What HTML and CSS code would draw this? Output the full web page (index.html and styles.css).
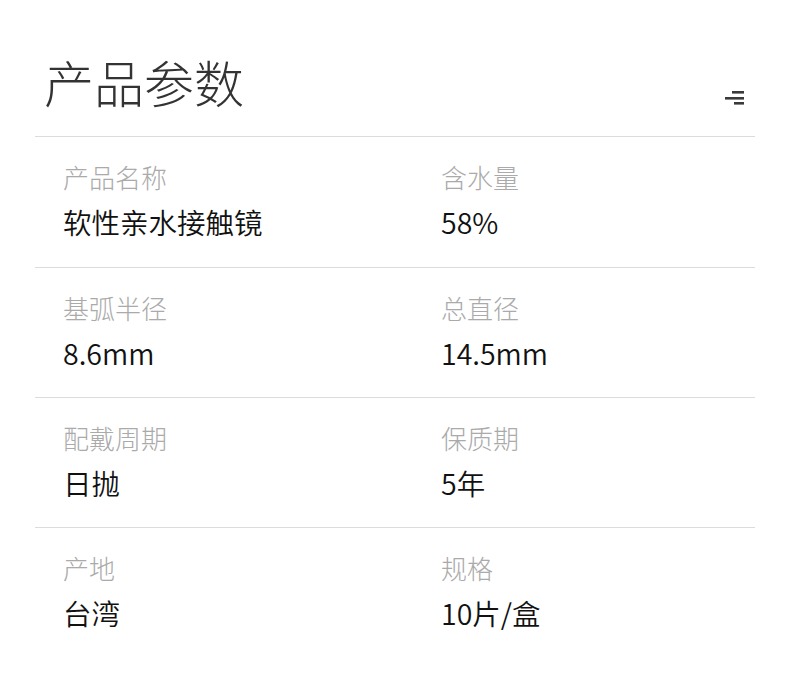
FILE: index.html
```html
<!DOCTYPE html>
<html lang="zh-CN">
<head>
<meta charset="utf-8">
<title>产品参数</title>
<link rel="stylesheet" href="styles.css">
</head>
<body>
<div class="page">
  <header class="head">
    <h1 class="title">产品参数</h1>
    <svg class="menu" width="20" height="14" viewBox="0 0 20 14" aria-hidden="true">
      <rect x="7" y="0" width="12" height="2.6" fill="#3a3a3a"/>
      <rect x="0" y="6" width="19" height="2.6" fill="#3a3a3a"/>
      <rect x="9" y="11" width="10" height="2.6" fill="#3a3a3a"/>
    </svg>
  </header>
  <div class="row first">
    <div class="cell"><div class="label">产品名称</div><div class="value">软性亲水接触镜</div></div>
    <div class="cell"><div class="label">含水量</div><div class="value">58%</div></div>
  </div>
  <div class="row">
    <div class="cell"><div class="label">基弧半径</div><div class="value">8.6mm</div></div>
    <div class="cell"><div class="label">总直径</div><div class="value">14.5mm</div></div>
  </div>
  <div class="row">
    <div class="cell"><div class="label">配戴周期</div><div class="value">日抛</div></div>
    <div class="cell"><div class="label">保质期</div><div class="value">5年</div></div>
  </div>
  <div class="row">
    <div class="cell"><div class="label">产地</div><div class="value">台湾</div></div>
    <div class="cell"><div class="label">规格</div><div class="value">10片/盒</div></div>
  </div>
</div>
</body>
</html>
```
FILE: styles.css
```css
html, body {
  margin: 0;
  padding: 0;
  background: #fff;
}
body {
  font-family: "Noto Sans CJK SC", "Noto Sans", sans-serif;
}
.page {
  width: 720px;
  margin: 0 35px;
}
.head {
  height: 136px;
  display: flex;
  align-items: flex-start;
  justify-content: space-between;
  box-sizing: border-box;
  padding: 46px 10px 0 9px;
}
.title {
  margin: 0;
  font-size: 50px;
  font-weight: 300;
  line-height: 70px;
  color: #333;
}
.menu {
  margin-top: 45px;
  display: block;
}
.row {
  display: grid;
  grid-template-columns: 378px 1fr;
  padding-left: 28px;
  height: 130px;
  box-sizing: border-box;
  border-top: 1px solid #dcdcdc;
  padding-top: 21px;
}
.row.first {
  height: 131px;
}
.label {
  font-size: 26px;
  font-weight: 300;
  color: #aaa;
  line-height: 38px;
}
.value {
  font-size: 28.5px;
  font-weight: 350;
  color: #111;
  line-height: 40px;
  margin-top: 6px;
}
```
